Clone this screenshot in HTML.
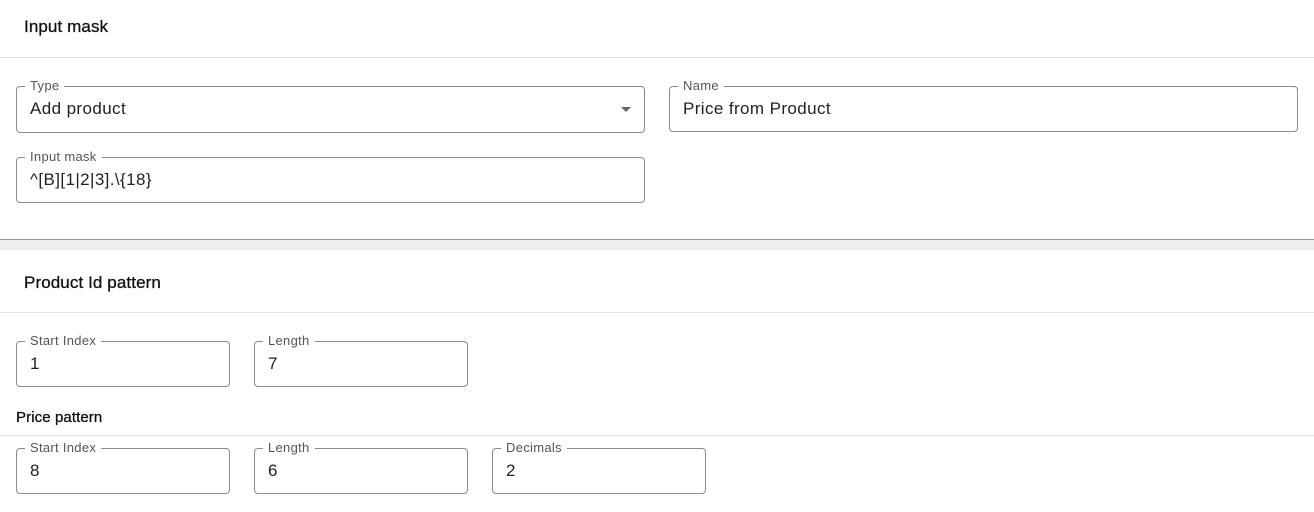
<!DOCTYPE html>
<html><head><meta charset="utf-8"><style>
*{box-sizing:border-box;margin:0;padding:0}
body{width:1314px;height:512px;background:#fff;font-family:"Liberation Sans",sans-serif;color:#212121;position:relative;overflow:hidden}
.abs{position:absolute}
.h{font-size:17px;font-weight:normal;color:#111;letter-spacing:0.1px;-webkit-text-stroke:0.3px #111}
.div{left:0;width:1314px;height:1px;background:#e3e3e3}
.f{position:absolute;border:1px solid #8a8a8a;border-radius:4px}
.f .l{position:absolute;left:8px;top:-9px;background:#fff;padding:0 5px;font-size:13px;color:#555;line-height:16px;letter-spacing:0.3px}
.f .v{position:absolute;left:13px;top:12px;font-size:17px;color:#222;line-height:20px;letter-spacing:0.4px}
</style></head><body>
<div class="abs h" style="left:24px;top:17px">Input mask</div>
<div class="abs div" style="top:57px"></div>
<div class="f" style="left:16px;top:86px;width:629px;height:47px"><span class="l">Type</span><span class="v">Add product</span>
<svg class="abs" style="left:603px;top:19px" width="12" height="7"><path d="M1 1h10l-5 5z" fill="#666"/></svg></div>
<div class="f" style="left:669px;top:86px;width:629px;height:46px"><span class="l">Name</span><span class="v">Price from Product</span></div>
<div class="f" style="left:16px;top:157px;width:629px;height:46px"><span class="l">Input mask</span><span class="v">^[B][1|2|3].\{18}</span></div>
<div class="abs" style="left:0;top:239px;width:1314px;height:1px;background:#9a9a9a"></div>
<div class="abs" style="left:0;top:240px;width:1314px;height:10px;background:#eeeeee"></div>
<div class="abs h" style="left:24px;top:273px">Product Id pattern</div>
<div class="abs div" style="top:312px"></div>
<div class="f" style="left:16px;top:341px;width:214px;height:46px"><span class="l">Start Index</span><span class="v">1</span></div>
<div class="f" style="left:254px;top:341px;width:214px;height:46px"><span class="l">Length</span><span class="v">7</span></div>
<div class="abs h" style="left:16px;top:409px;font-size:15px">Price pattern</div>
<div class="abs div" style="top:435px"></div>
<div class="f" style="left:16px;top:448px;width:214px;height:46px"><span class="l">Start Index</span><span class="v">8</span></div>
<div class="f" style="left:254px;top:448px;width:214px;height:46px"><span class="l">Length</span><span class="v">6</span></div>
<div class="f" style="left:492px;top:448px;width:214px;height:46px"><span class="l">Decimals</span><span class="v">2</span></div>
</body></html>
